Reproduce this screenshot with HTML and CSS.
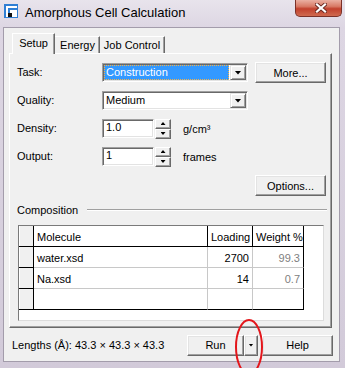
FILE: index.html
```html
<!DOCTYPE html>
<html lang="en">
<head>
    <meta charset="UTF-8">
    <title>Amorphous Cell Calculation</title>
    <link rel="stylesheet" href="styles.css">
</head>
<body>
    <div class="window">
        <div class="titlebar">
            <svg class="app-icon" width="14" height="14" viewBox="0 0 14 14">
                <rect width="14" height="14" fill="#2f7fd4"/>
                <rect x="2" y="2" width="11" height="11" fill="#fff"/>
                <path d="M4 4h9v2H6v7H4z" fill="#2f7fd4"/>
                <rect x="4" y="9" width="4" height="4" fill="#111"/>
            </svg>
            <span class="title">Amorphous Cell Calculation</span>
            <div class="close">
                <svg width="12" height="10" viewBox="0 0 12 10">
                    <path d="M2 1.5l8 7M10 1.5l-8 7" stroke="#6b2a22" stroke-width="4" stroke-linecap="square"/>
                    <path d="M2 1.5l8 7M10 1.5l-8 7" stroke="#fff" stroke-width="2.2" stroke-linecap="square"/>
                </svg>
            </div>
        </div>

        <div class="client">
            <ul class="tabs">
                <li class="tab active">Setup</li>
                <li class="tab energy">Energy</li>
                <li class="tab job">Job Control</li>
            </ul>

            <div class="panel">
                <div class="form">
                    <span class="label">Task:</span>
                    <div class="combo">
                        <span class="value selected">Construction</span>
                        <span class="drop"><i class="tri"></i></span>
                    </div>
                    <button class="btn more">More...</button>

                    <span class="label">Quality:</span>
                    <div class="combo">
                        <span class="value">Medium</span>
                        <span class="drop"><i class="tri"></i></span>
                    </div>
                    <span></span>

                    <span class="label">Density:</span>
                    <div class="field">
                        <span class="input">1.0</span>
                        <span class="spin"><b><i class="up"></i></b><b><i class="down"></i></b></span>
                        <span class="unit">g/cm³</span>
                    </div>
                    <span></span>

                    <span class="label">Output:</span>
                    <div class="field">
                        <span class="input">1</span>
                        <span class="spin"><b><i class="up"></i></b><b><i class="down"></i></b></span>
                        <span class="unit">frames</span>
                    </div>
                    <span></span>
                </div>

                <div class="options-row">
                    <button class="btn">Options...</button>
                </div>

                <div class="group">
                    <div class="group-head">
                        <span class="caption">Composition</span>
                    </div>
                    <div class="grid-frame">
                        <table class="grid">
                            <colgroup>
                                <col style="width:15px">
                                <col style="width:174px">
                                <col style="width:45px">
                                <col style="width:51px">
                            </colgroup>
                            <tr>
                                <td class="rowhead"></td>
                                <th class="left">Molecule</th>
                                <th>Loading</th>
                                <th>Weight %</th>
                            </tr>
                            <tr>
                                <td class="rowhead"></td>
                                <td class="left">water.xsd</td>
                                <td>2700</td>
                                <td class="ro last">99.3</td>
                            </tr>
                            <tr>
                                <td class="rowhead"></td>
                                <td class="left">Na.xsd</td>
                                <td>14</td>
                                <td class="ro last">0.7</td>
                            </tr>
                            <tr class="end">
                                <td class="rowhead"></td>
                                <td class="left"></td>
                                <td></td>
                                <td class="last"></td>
                            </tr>
                        </table>
                    </div>
                </div>
            </div>

            <div class="status">
                <span class="lengths">Lengths (Å): 43.3 × 43.3 × 43.3</span>
                <div class="split">
                    <button class="btn run">Run</button>
                    <button class="btn arrow"><i class="tri small"></i></button>
                </div>
                <button class="btn help">Help</button>
            </div>
        </div>

        <svg class="mark" width="30" height="60" viewBox="0 0 30 60">
            <ellipse cx="15" cy="29" rx="13" ry="27" fill="none" stroke="#e3161b" stroke-width="2"/>
        </svg>
    </div>
</body>
</html>
```

FILE: styles.css
```css
*{
    box-sizing: border-box;
}
body{
    margin: 0;
    width: 345px;
    height: 368px;
    overflow: hidden;
    font-family: "Liberation Sans", Arial, sans-serif;
    font-size: 11px;
    color: #000;
    background: #d4ccdb;
}
.window{
    position: relative;
    width: 345px;
    height: 368px;
    display: flex;
    flex-direction: column;
    background: linear-gradient(#e8e4ec, #ddd6e3 27px, #d2cad9);
}

/* title bar */
.titlebar{
    height: 27px;
    flex: none;
    display: flex;
    align-items: flex-start;
    padding-left: 4px;
}
.app-icon{
    margin-top: 4px;
    flex: none;
}
.title{
    margin: 5px 0 0 7px;
    font-size: 13px;
    line-height: 16px;
    color: #000;
}
.close{
    margin-left: auto;
    margin-right: 3px;
    width: 47px;
    height: 17px;
    display: flex;
    align-items: center;
    justify-content: center;
    padding-left: 4px;
    border: 1px solid #7b3128;
    border-top: none;
    border-radius: 0 0 5px 5px;
    background: linear-gradient(#eab0a2, #d87a66 40%, #c2412d 55%, #cf6a50);
}

/* client area */
.client{
    flex: 1;
    margin: 0 5px 6px 3px;
    padding: 5px 7px 0 5px;
    background: #f0f0f0;
    border: 1px solid #a39cab;
    display: flex;
    flex-direction: column;
}

.tabs{
    list-style: none;
    margin: 0;
    padding: 0 0 0 3px;
    height: 20px;
    display: flex;
    align-items: flex-start;
    position: relative;
    z-index: 2;
}
.tab{
    height: 17px;
    margin-top: 3px;
    padding-top: 2px;
    line-height: 13px;
    text-align: center;
    background: #f0f0f0;
    border-top: 1px solid #fff;
    border-left: 1px solid #fff;
    border-right: 1px solid #696969;
    box-shadow: inset -1px 0 #a0a0a0;
}
.tab.active{
    width: 43px;
    height: 21px;
    margin-top: 0;
    padding-top: 3px;
}
.tab.energy{
    width: 45px;
    border-left: none;
    padding-left: 1px;
}
.tab.job{
    width: 65px;
    border-left: none;
}

.panel{
    height: 275px;
    flex: none;
    background: #f0f0f0;
    border: 1px solid;
    border-color: #fff #696969 #696969 #fff;
    box-shadow: inset -1px -1px #a0a0a0;
    padding: 8px 5px 0 7px;
}

/* setup form */
.form{
    display: grid;
    grid-template-columns: 85px 146px 1fr;
    grid-auto-rows: 21px;
    row-gap: 7px;
    align-items: center;
}
.label{
    line-height: 13px;
}
.combo{
    height: 19px;
    display: flex;
    align-items: stretch;
    background: #fff;
    border: 1px solid;
    border-color: #a0a0a0 #fff #fff #a0a0a0;
    box-shadow: inset 1px 1px #696969, inset -1px -1px #e3e3e3;
    padding: 1px;
}
.value{
    flex: 1;
    line-height: 15px;
    padding-left: 2px;
    margin-right: 1px;
}
.value.selected{
    background: #3399ff;
    color: #fff;
    outline: 1px dotted #f2b24a;
    outline-offset: -1px;
}
.drop{
    width: 16px;
    display: flex;
    align-items: center;
    justify-content: center;
    background: #f0f0f0;
    border: 1px solid;
    border-color: #e3e3e3 #696969 #696969 #e3e3e3;
    box-shadow: inset 1px 1px #fff, inset -1px -1px #a0a0a0;
}
.tri{
    display: block;
    width: 7px;
    height: 4px;
    background: #000;
    clip-path: polygon(0 0, 100% 0, 50% 100%);
}
.tri.small{
    width: 5px;
    height: 3px;
}
.btn{
    font-family: inherit;
    font-size: 11px;
    color: #000;
    padding: 0;
    background: #f0f0f0;
    border: 1px solid;
    border-color: #fff #696969 #696969 #fff;
    box-shadow: inset -1px -1px #a0a0a0, inset 1px 1px #e3e3e3;
    height: 21px;
    width: 71px;
}
.more{
    justify-self: end;
}
.field{
    display: flex;
    align-items: center;
}
.input{
    width: 52px;
    height: 19px;
    background: #fff;
    line-height: 15px;
    padding-left: 3px;
    border: 1px solid;
    border-color: #a0a0a0 #fff #fff #a0a0a0;
    box-shadow: inset 1px 1px #696969, inset -1px -1px #e3e3e3;
}
.spin{
    width: 16px;
    height: 20px;
    margin-left: 1px;
    display: flex;
    flex-direction: column;
}
.spin b{
    flex: 1;
    display: flex;
    align-items: center;
    justify-content: center;
    background: #f0f0f0;
    border: 1px solid;
    border-color: #fff #696969 #696969 #fff;
    box-shadow: inset -1px -1px #a0a0a0;
}
.spin i{
    display: block;
    width: 5px;
    height: 3px;
    background: #000;
}
.spin .up{
    clip-path: polygon(50% 0, 100% 100%, 0 100%);
}
.spin .down{
    clip-path: polygon(0 0, 100% 0, 50% 100%);
}
.unit{
    margin-left: 12px;
}

.options-row{
    margin-top: 8px;
    display: flex;
    justify-content: flex-end;
}

/* composition group */
.group{
    margin-top: 7px;
}
.group-head{
    position: relative;
    height: 14px;
    line-height: 14px;
    width: 310px;
    background: linear-gradient(#f0f0f0 6px, #a0a0a0 6px, #a0a0a0 7px, #fff 7px, #fff 8px, #f0f0f0 8px);
}
.caption{
    display: inline-block;
    height: 14px;
    padding-right: 9px;
    background: #f0f0f0;
}
.grid-frame{
    margin: 8px 0 0 1px;
    width: 306px;
    height: 96px;
    background: #fff;
    border: 1px solid;
    border-color: #7a7a7a #dcdcdc #dcdcdc #7a7a7a;
}
.grid{
    width: 285px;
    table-layout: fixed;
    border-collapse: separate;
    border-spacing: 0;
}
.grid th,
.grid td{
    height: 21px;
    padding: 5px 3px 2px;
    line-height: 13px;
    font-weight: normal;
    text-align: right;
    white-space: nowrap;
    border-right: 1px solid #c8c8c8;
    border-bottom: 1px solid #c8c8c8;
}
.grid th{
    border-color: #000;
}
.grid .left{
    text-align: left;
}
.grid .rowhead{
    background: #f0f0f0;
    border-right-color: #000;
    border-bottom-color: #000;
    box-shadow: inset 1px 0 #fff;
}
.grid td.last{
    border-right-color: #000;
}
.grid .ro{
    color: #808080;
}
.grid tr.end td{
    border-bottom-color: #000;
}

/* bottom bar */
.status{
    flex: 1;
    display: flex;
    align-items: center;
    margin-right: -1px;
    padding: 1px 0 0 3px;
}
.split{
    margin-left: auto;
    display: flex;
}
.run{
    width: 57px;
}
.arrow{
    width: 14px;
    display: flex;
    align-items: center;
    justify-content: center;
}
.help{
    margin-left: 4px;
}

/* red annotation ring */
.mark{
    position: absolute;
    left: 234px;
    top: 318px;
    overflow: visible;
}
```
